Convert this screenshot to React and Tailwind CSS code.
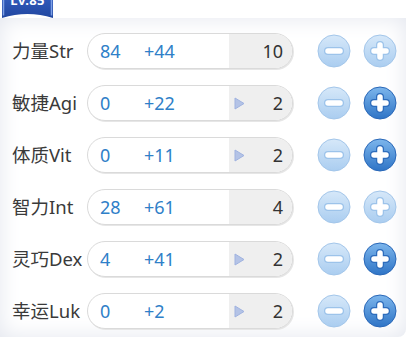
const stats = [
  { label: '力量Str', base: 84, bonus: 44, cost: 10, canAdd: false },
  { label: '敏捷Agi', base: 0, bonus: 22, cost: 2, canAdd: true },
  { label: '体质Vit', base: 0, bonus: 11, cost: 2, canAdd: true },
  { label: '智力Int', base: 28, bonus: 61, cost: 4, canAdd: false },
  { label: '灵巧Dex', base: 4, bonus: 41, cost: 2, canAdd: true },
  { label: '幸运Luk', base: 0, bonus: 2, cost: 2, canAdd: true },
];

const RoundButton = ({ type, active }) => {
  const id = `${type}-${active ? 'on' : 'off'}`;
  const top = active ? '#7db6ec' : '#d6e8f9';
  const bottom = active ? '#2e74c6' : '#aacdf0';
  const ring = active ? '#2a68b8' : '#a3c6ea';
  const line = active ? '#2d6cbc' : '#9cc3ea';
  const shape = type === 'plus' ? 'M11 17 H23 M17 11 V23' : 'M11 17 H23';
  return (
    <svg width="34" height="34" viewBox="0 0 34 34" className="shrink-0">
      <defs>
        <linearGradient id={id} x1="0" y1="0" x2="0" y2="1">
          <stop offset="0" stopColor={top} />
          <stop offset="1" stopColor={bottom} />
        </linearGradient>
      </defs>
      <circle cx="17" cy="17" r="16" fill={`url(#${id})`} stroke={ring} strokeWidth="1" />
      <path d={shape} stroke={line} strokeWidth="8" strokeLinecap="round" fill="none" />
      <path d={shape} stroke="#ffffff" strokeWidth="5.5" strokeLinecap="round" fill="none" />
    </svg>
  );
};

const StatRow = ({ stat }) => (
  <div className="flex items-center h-9">
    <div className="w-[87px] shrink-0 pl-3 text-[18.5px] text-[#3a3a3a] whitespace-nowrap">{stat.label}</div>
    <div className="flex items-center w-[206px] shrink-0 h-9 rounded-full border border-[#dadada] bg-white overflow-hidden shadow-[1px_1px_0_#e6e6e6]">
      <span className="w-[56px] pl-3 text-[18px] text-[#2f80c8]">{stat.base}</span>
      <span className="w-[85px] text-[18px] text-[#2f80c8]">+{stat.bonus}</span>
      <div className="flex-1 h-full flex items-center bg-[#efefef] pl-[5px] pr-[9px]">
        {stat.canAdd && (
          <svg width="11" height="13" viewBox="0 0 11 13">
            <path d="M1 1 L10 6.5 L1 12 Z" fill="#b4c3e6" stroke="#9fb2df" strokeWidth="1" strokeLinejoin="round" />
          </svg>
        )}
        <span className="ml-auto text-[18px] text-[#333]">{stat.cost}</span>
      </div>
    </div>
    <div className="flex items-center gap-3 ml-6">
      <RoundButton type="minus" active={false} />
      <RoundButton type="plus" active={stat.canAdd} />
    </div>
  </div>
);

export default function App() {
  return (
    <div
      className="w-[406px] h-[343px] bg-white relative overflow-hidden"
      style={{ fontFamily: '"Noto Sans", "Noto Sans CJK SC", sans-serif' }}
    >
      {/* level ribbon */}
      <div className="absolute left-[2px] top-0 z-10 w-[51px] h-[18px]">
        <svg width="51" height="18" viewBox="0 0 51 18" className="absolute inset-0">
          <defs>
            <linearGradient id="rib" x1="0" y1="0" x2="0" y2="1">
              <stop offset="0" stopColor="#2f58b8" />
              <stop offset="1" stopColor="#2147a0" />
            </linearGradient>
          </defs>
          <path d="M0 0 H51 V18 Q25.5 10 0 18 Z" fill="url(#rib)" />
          <path d="M1.5 0 V15.5 M49.5 0 V15.5" stroke="#7ea0e6" strokeWidth="1.5" />
        </svg>
        <div className="absolute left-0 right-0 top-[-9px] text-center text-white text-[13px] font-bold tracking-wide">Lv.85</div>
      </div>

      {/* panel */}
      <div className="absolute left-0 right-0 top-[18px] bottom-[6px] rounded-br-lg bg-white shadow-[inset_0_0_22px_#e3e6ee]" />
      <div className="relative flex flex-col gap-4 pt-[33px]">
        {stats.map((s) => (
          <StatRow key={s.label} stat={s} />
        ))}
      </div>
    </div>
  );
}
